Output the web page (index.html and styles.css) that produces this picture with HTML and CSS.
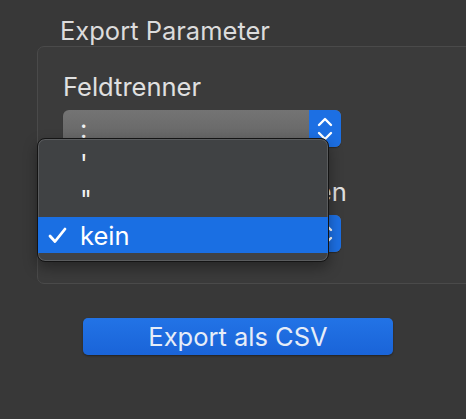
FILE: index.html
```html
<!DOCTYPE html>
<html>
<head>
  <title>Export Parameter</title>
  <link rel="stylesheet" href="styles.css">
</head>
<body>
  <div class="window">
    <h1 class="group-title">Export Parameter</h1>

    <div class="group-box">
      <div class="field">
        <label class="field-label">Feldtrenner</label>
        <div class="popup-button">
          <span class="popup-value">:</span>
          <span class="stepper">
            <svg width="20" height="30" viewBox="0 0 20 30">
              <path d="M4 11 L10 5 L16 11" fill="none" stroke="#fff" stroke-width="2.4" stroke-linecap="round" stroke-linejoin="round"/>
              <path d="M4 19 L10 25 L16 19" fill="none" stroke="#fff" stroke-width="2.4" stroke-linecap="round" stroke-linejoin="round"/>
            </svg>
          </span>
        </div>
      </div>

      <div class="field">
        <label class="field-label">Textanführungszeichen</label>
        <div class="popup-button">
          <span class="popup-value">kein</span>
          <span class="stepper">
            <svg width="20" height="30" viewBox="0 0 20 30">
              <path d="M4 11 L10 5 L16 11" fill="none" stroke="#fff" stroke-width="2.4" stroke-linecap="round" stroke-linejoin="round"/>
              <path d="M4 19 L10 25 L16 19" fill="none" stroke="#fff" stroke-width="2.4" stroke-linecap="round" stroke-linejoin="round"/>
            </svg>
          </span>
        </div>
      </div>
    </div>

    <div class="actions">
      <button class="export-button">Export als CSV</button>
    </div>

    <!-- geoeffnetes Menue ueber dem zweiten Popup -->
    <ul class="menu">
      <li class="menu-item"><span class="check"></span>'</li>
      <li class="menu-item"><span class="check"></span>"</li>
      <li class="menu-item selected">
        <span class="check">
          <svg width="19" height="17" viewBox="0 0 19 17">
            <path d="M2 9 L7 14.5 L17 2" fill="none" stroke="#fff" stroke-width="2.8" stroke-linecap="round" stroke-linejoin="round"/>
          </svg>
        </span>kein
      </li>
    </ul>
  </div>
</body>
</html>
```

FILE: styles.css
```css
body {
  margin: 0;
  background-color: #383838;
  font-family: Inter, "Noto Sans", sans-serif;
  color: #e2e2e2;
}

.window {
  position: relative;
  width: 466px;
  height: 419px;
  overflow: hidden;
  padding-top: 15px;
  box-sizing: border-box;
}

.group-title {
  margin: 0 0 0 60px;
  font-size: 25.5px;
  font-weight: 400;
  line-height: 31px;
  color: #dcdcdc;
}

.group-box {
  margin-left: 37px;
  width: 470px;
  height: 238px;
  box-sizing: border-box;
  background-color: #3b3b3b;
  border: 1px solid #4a4a4a;
  border-radius: 7px;
  padding: 24px 0 0 25px;
}

.field {
  margin-bottom: 29px;
}

.field-label {
  display: block;
  font-size: 25.5px;
  line-height: 32px;
  margin-bottom: 7px;
  color: #e0e0e0;
  white-space: nowrap;
}

.popup-button {
  display: flex;
  width: 278px;
  height: 37px;
  border-radius: 6px;
  overflow: hidden;
  background: linear-gradient(#747474, #626262);
  box-shadow: 0 1px 1px rgba(0, 0, 0, 0.3);
}

.popup-value {
  flex: 1;
  padding-left: 17px;
  font-size: 25.5px;
  line-height: 37px;
  color: #f0f0f0;
}

.stepper {
  width: 32px;
  display: flex;
  align-items: center;
  justify-content: center;
  background-color: #1c6fe3;
}

.actions {
  padding: 34px 0 0 83px;
}

.export-button {
  width: 310px;
  height: 37px;
  border: none;
  border-radius: 5px;
  background: linear-gradient(#2273e6, #1a64d8);
  box-shadow: 0 1px 2px rgba(0, 0, 0, 0.4);
  font-family: Inter, "Noto Sans", sans-serif;
  font-size: 25.5px;
  color: #e6edf8;
  padding: 0;
}

.menu {
  position: absolute;
  left: 37px;
  top: 138px;
  width: 292px;
  height: 124px;
  box-sizing: border-box;
  margin: 0;
  padding: 6px 0 0 0;
  list-style: none;
  background-color: #404244;
  border: 1px solid #141414;
  border-radius: 8px;
  box-shadow: inset 0 0 0 1px #5a5c5e, 0 6px 14px rgba(0, 0, 0, 0.35);
}

.menu-item {
  display: flex;
  align-items: center;
  height: 36px;
  font-size: 25.5px;
  color: #f2f2f2;
}

.menu-item.selected {
  background-color: #1a6fe3;
  color: #fff;
}

.check {
  width: 42px;
  display: flex;
  justify-content: flex-start;
  padding-left: 10px;
  box-sizing: border-box;
}
```
